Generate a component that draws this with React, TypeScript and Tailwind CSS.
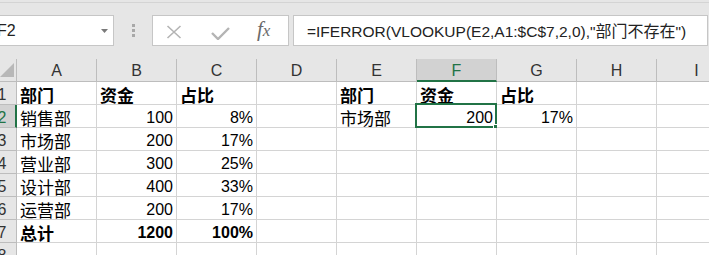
import React from "react";

const LAT = { fontFamily: '"Liberation Sans", "Noto Sans CJK SC", sans-serif' };
const CJK = { fontFamily: '"Noto Sans CJK SC", "Liberation Sans", sans-serif' };

type Cell = { t: string; align?: "l" | "r"; bold?: boolean; cjk?: boolean };

const cols = ["A", "B", "C", "D", "E", "F", "G", "H", "I"];

const L = (t: string, bold = false): Cell => ({ t, align: "l", bold, cjk: true });
const R = (t: string, bold = false): Cell => ({ t, align: "r", bold });
const E: Cell = { t: "" };

const rows: Cell[][] = [
  [L("部门", true), L("资金", true), L("占比", true), E, L("部门", true), L("资金", true), L("占比", true), E, E],
  [L("销售部"), R("100"), R("8%"), E, L("市场部"), R("200"), R("17%"), E, E],
  [L("市场部"), R("200"), R("17%"), E, E, E, E, E, E],
  [L("营业部"), R("300"), R("25%"), E, E, E, E, E, E],
  [L("设计部"), R("400"), R("33%"), E, E, E, E, E, E],
  [L("运营部"), R("200"), R("17%"), E, E, E, E, E, E],
  [L("总计", true), R("1200", true), R("100%", true), E, E, E, E, E, E],
  [E, E, E, E, E, E, E, E, E],
];

export default function App() {
  return (
    <div className="w-[709px] h-[255px] overflow-hidden bg-[#e6e6e6] relative" style={LAT}>
      {/* toolbar */}
      <div className="h-[59px] pt-[2px]">
        <div className="border-t border-[#d4d4d4] h-[13px]" />
        <div className="flex items-start h-[31px]">
          {/* name box */}
          <div className="w-[115px] h-[31px] -ml-[1px] bg-white border border-[#c6c6c6] flex items-center relative">
            <span className="text-[16px] leading-none text-[#222] -ml-[3px]">F2</span>
            <svg className="absolute left-[101px] top-[13px]" width="7" height="4" viewBox="0 0 7 4">
              <path d="M0 0 L7 0 L3.5 4 Z" fill="#7a7a7a" />
            </svg>
          </div>
          {/* dots */}
          <div className="w-[38px] h-[31px] flex flex-col items-center justify-center gap-[2px]">
            <div className="w-[3px] h-[3px] bg-[#a8a8a8]" />
            <div className="w-[3px] h-[3px] bg-[#a8a8a8]" />
            <div className="w-[3px] h-[3px] bg-[#a8a8a8]" />
          </div>
          {/* fx box */}
          <div className="w-[137px] h-[31px] bg-white border border-[#c6c6c6] relative">
            <svg className="absolute left-[13px] top-[9px]" width="16" height="14" viewBox="0 0 16 14">
              <path d="M1.5 1 L14.5 13 M14.5 1 L1.5 13" stroke="#b4b4b4" strokeWidth="1.6" fill="none" />
            </svg>
            <svg className="absolute left-[58px] top-[11px]" width="19" height="13" viewBox="0 0 19 13">
              <path d="M1 6 L7 12 L18 1" stroke="#b4b4b4" strokeWidth="2.4" fill="none" />
            </svg>
            <span
              className="absolute left-[104px] top-[3px] text-[21px] italic leading-none text-[#6a6a6a]"
              style={{ fontFamily: '"Liberation Serif", serif' }}
            >
              f<span className="text-[17px]">x</span>
            </span>
          </div>
          <div className="w-[4px]" />
          {/* formula box */}
          <div className="w-[415px] h-[31px] bg-white border border-[#c6c6c6] flex items-center pl-[13px]">
            <span className="text-[15.5px] leading-none text-[#222] whitespace-nowrap">
              =IFERROR(VLOOKUP(E2,A1:$C$7,2,0),"
              <span className="text-[16px]" style={CJK}>部门不存在</span>
              ")
            </span>
          </div>
        </div>
      </div>

      {/* column header */}
      <div className="flex h-[23px]">
        <div className="w-[17px] shrink-0 h-[23px] border-r border-b border-[#bdbdbd] relative">
          <svg className="absolute left-0 top-[4px]" width="14" height="14" viewBox="0 0 14 14">
            <path d="M14 0 L14 14 L0 14 Z" fill="#b8b8b8" />
          </svg>
        </div>
        {cols.map((c) => {
          const sel = c === "F";
          return (
            <div
              key={c}
              className={
                sel
                  ? "w-[80px] shrink-0 h-[23px] bg-[#d2d2d2] border-r border-[#bdbdbd] border-b-2 border-b-[#217346] flex items-end justify-center pb-[1px] text-[16px] leading-none text-[#217346]"
                  : "w-[80px] shrink-0 h-[23px] border-r border-b border-[#bdbdbd] flex items-end justify-center pb-[2px] text-[16px] leading-none text-[#333]"
              }
            >
              {c}
            </div>
          );
        })}
      </div>

      {/* rows */}
      {rows.map((r, ri) => {
        const selRow = ri === 1;
        return (
          <div key={ri} className="flex h-[23px]">
            <div
              className={
                selRow
                  ? "w-[17px] shrink-0 h-[23px] overflow-hidden bg-[#d2d2d2] border-r-2 border-r-[#217346] border-b border-[#bdbdbd] flex items-end pb-[1px]"
                  : "w-[17px] shrink-0 h-[23px] overflow-hidden border-r border-b border-[#bdbdbd] flex items-end pb-[1px]"
              }
            >
              <div
                className={
                  selRow
                    ? "w-[28px] shrink-0 -ml-[12px] text-center text-[16px] leading-none text-[#217346]"
                    : "w-[28px] shrink-0 -ml-[12px] text-center text-[16px] leading-none text-[#333]"
                }
              >
                {ri + 1}
              </div>
            </div>
            {r.map((cell, ci) => {
              const sel = ri === 1 && ci === 5;
              return (
                <div
                  key={ci}
                  className={
                    "w-[80px] shrink-0 h-[23px] bg-white border-r border-b border-[#d4d4d4] flex items-end pb-[1px] relative " +
                    (cell.align === "r" ? "justify-end pr-[3px]" : "justify-start pl-[3px]")
                  }
                >
                  {cell.t && (
                    <span
                      className={
                        (cell.cjk ? "text-[17px] " : "text-[16px] ") +
                        (cell.bold ? "font-bold " : "") +
                        "leading-none text-black whitespace-nowrap"
                      }
                      style={cell.cjk ? CJK : LAT}
                    >
                      {cell.t}
                    </span>
                  )}
                  {sel && (
                    <>
                      <div className="absolute -left-[2px] -top-[2px] -right-[1px] -bottom-[1px] border-2 border-[#217346]" />
                      <div className="absolute -right-[3px] -bottom-[3px] w-[6px] h-[6px] bg-[#217346] border border-white" />
                    </>
                  )}
                </div>
              );
            })}
          </div>
        );
      })}
    </div>
  );
}
